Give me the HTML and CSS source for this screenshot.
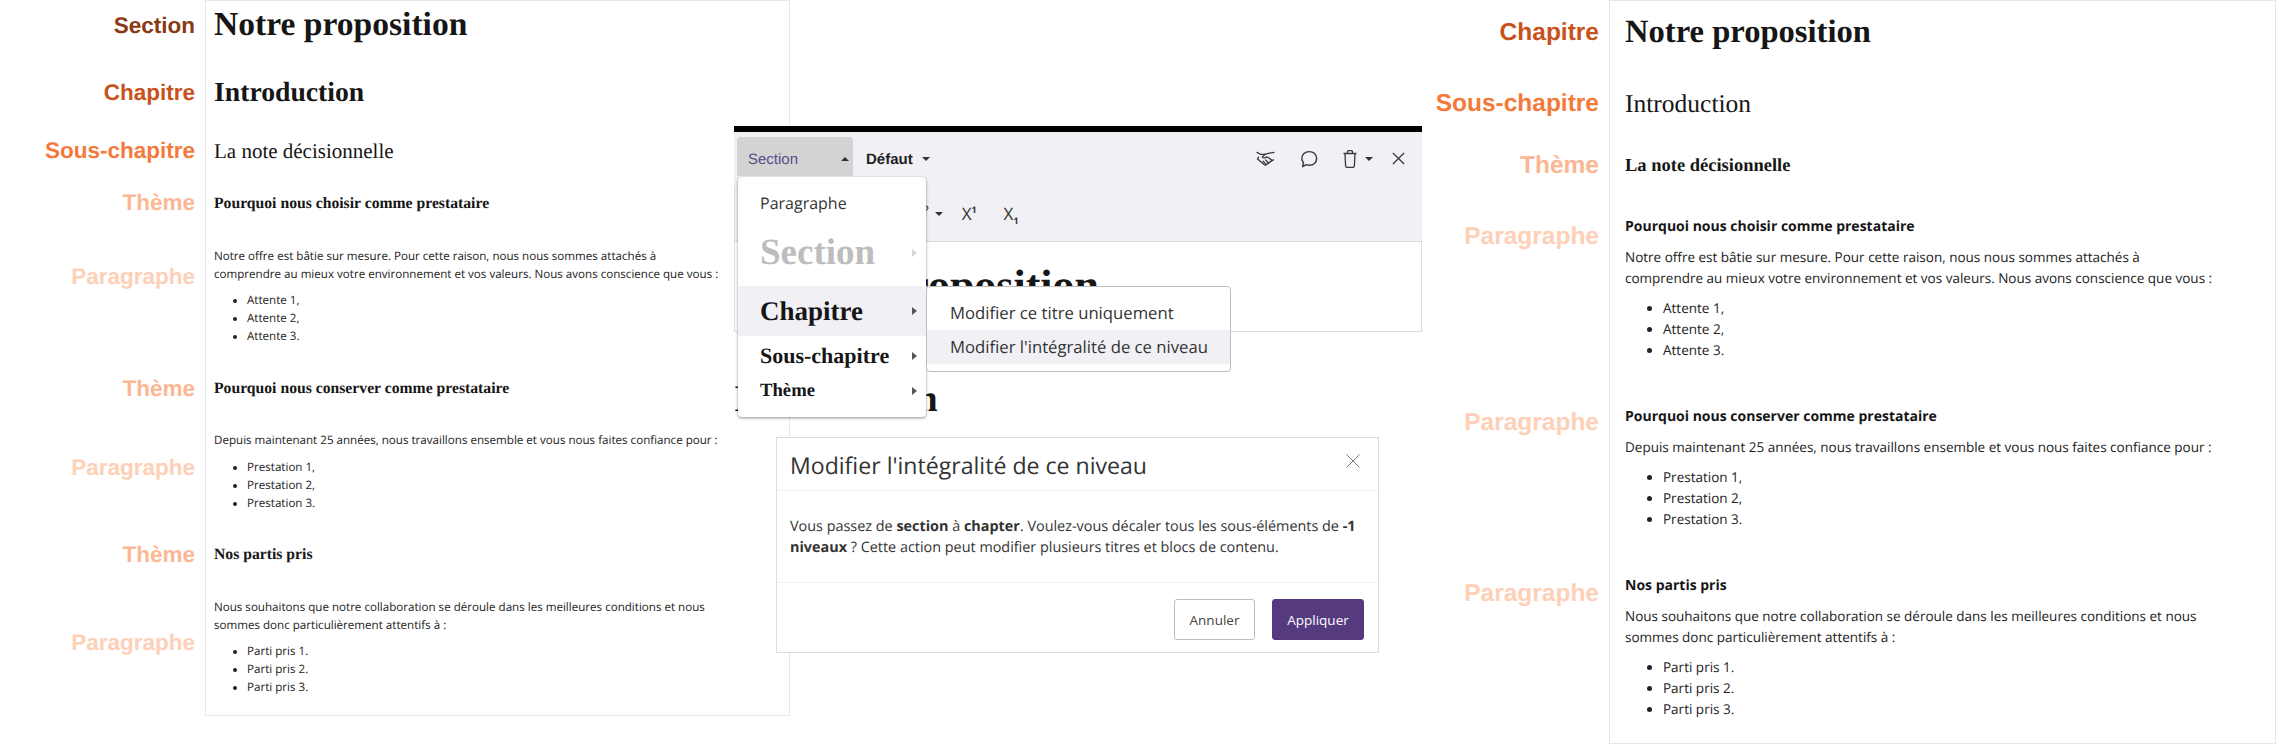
FILE: index.html
```html
<!DOCTYPE html>
<html lang="fr">
<head>
<meta charset="utf-8">
<title>Niveaux de titres</title>
<link rel="stylesheet" href="styles.css">
</head>
<body>
<div class="page">
  <section class="doc doc-a">
    <div class="block top"><span class="label c-section a-l1">Section</span><div class="cell a-p1"><h1 class="a-h1">Notre proposition</h1></div></div>
    <div class="block"><span class="label c-chapitre a-l2">Chapitre</span><div class="cell a-p2"><h2 class="a-h2">Introduction</h2></div></div>
    <div class="block"><span class="label c-sous a-l3">Sous-chapitre</span><div class="cell a-p3"><h3 class="a-h3">La note décisionnelle</h3></div></div>
    <div class="block"><span class="label c-theme a-l4">Thème</span><div class="cell a-p4"><h4 class="a-h4">Pourquoi nous choisir comme prestataire</h4></div></div>
    <div class="block"><span class="label c-para a-l5">Paragraphe</span><div class="cell a-p5">
      <p class="a-text">Notre offre est bâtie sur mesure. Pour cette raison, nous nous sommes attachés à<br>comprendre au mieux votre environnement et vos valeurs. Nous avons conscience que vous :</p>
      <ul class="a-list"><li>Attente 1,</li><li>Attente 2,</li><li>Attente 3.</li></ul>
    </div></div>
    <div class="block"><span class="label c-theme a-l6">Thème</span><div class="cell a-p6"><h4 class="a-h4">Pourquoi nous conserver comme prestataire</h4></div></div>
    <div class="block"><span class="label c-para a-l7">Paragraphe</span><div class="cell a-p7">
      <p class="a-text">Depuis maintenant 25 années, nous travaillons ensemble et vous nous faites confiance pour :</p>
      <ul class="a-list a-list-wide"><li>Prestation 1,</li><li>Prestation 2,</li><li>Prestation 3.</li></ul>
    </div></div>
    <div class="block"><span class="label c-theme a-l8">Thème</span><div class="cell a-p8"><h4 class="a-h4">Nos partis pris</h4></div></div>
    <div class="block bottom"><span class="label c-para a-l9">Paragraphe</span><div class="cell a-p9">
      <p class="a-text">Nous souhaitons que notre collaboration se déroule dans les meilleures conditions et nous<br>sommes donc particulièrement attentifs à :</p>
      <ul class="a-list"><li>Parti pris 1.</li><li>Parti pris 2.</li><li>Parti pris 3.</li></ul>
    </div></div>
  </section>

  <section class="doc doc-b">
    <div class="block top"><span class="label c-chapitre b-l1">Chapitre</span><div class="cell b-p1"><h1 class="b-h1">Notre proposition</h1></div></div>
    <div class="block"><span class="label c-sous b-l2">Sous-chapitre</span><div class="cell b-p2"><h2 class="b-h2">Introduction</h2></div></div>
    <div class="block"><span class="label c-theme b-l3">Thème</span><div class="cell b-p3"><h3 class="b-h3">La note décisionnelle</h3></div></div>
    <div class="block"><span class="label c-para b-l4">Paragraphe</span><div class="cell b-p4">
      <h4 class="b-h4">Pourquoi nous choisir comme prestataire</h4>
      <p class="b-text">Notre offre est bâtie sur mesure. Pour cette raison, nous nous sommes attachés à<br>comprendre au mieux votre environnement et vos valeurs. Nous avons conscience que vous :</p>
      <ul class="b-list"><li>Attente 1,</li><li>Attente 2,</li><li>Attente 3.</li></ul>
    </div></div>
    <div class="block"><span class="label c-para b-l5">Paragraphe</span><div class="cell b-p5">
      <h4 class="b-h4">Pourquoi nous conserver comme prestataire</h4>
      <p class="b-text">Depuis maintenant 25 années, nous travaillons ensemble et vous nous faites confiance pour :</p>
      <ul class="b-list"><li>Prestation 1,</li><li>Prestation 2,</li><li>Prestation 3.</li></ul>
    </div></div>
    <div class="block bottom"><span class="label c-para b-l6">Paragraphe</span><div class="cell b-p6">
      <h4 class="b-h4">Nos partis pris</h4>
      <p class="b-text">Nous souhaitons que notre collaboration se déroule dans les meilleures conditions et nous<br>sommes donc particulièrement attentifs à :</p>
      <ul class="b-list"><li>Parti pris 1.</li><li>Parti pris 2.</li><li>Parti pris 3.</li></ul>
    </div></div>
  </section>

  <div class="behind-title">Introduction</div>

  <div class="editor">
    <div class="tool-row tool-row-1">
      <div class="style-btn"><span>Section</span><i class="caret caret-up"></i></div>
      <div class="font-btn"><span>Défaut</span><i class="caret"></i></div>
      <div class="tool-icons">
        <svg class="ico ico-shake" viewBox="0 0 20 16" fill="none" stroke="#3a3a3a" stroke-width="1.4" stroke-linejoin="round" stroke-linecap="round"><path d="M1 1.500l3.500 2h5L13 2.500l6-1"/><path d="M9.500 3.500 6.500 6.500c1.500 1.500 3.300 1 4.500-.3l2 .8 4 3"/><path d="M2.500 6.500 1.500 8.500l7 6c1 .8 2.500.5 3-.5l5-3.500 2-1"/><path d="M7.500 11l2.500 2.500M10 9.500l3 3"/></svg>
        <svg class="ico ico-bubble" viewBox="0 0 20 20" fill="none" stroke="#3a3a3a" stroke-width="1.600" stroke-linejoin="round"><path d="M3 18.500 3.800 14C2.700 12.500 2 11 2 9.500 2 5 5.500 1.800 10.300 1.800S18.500 5 18.500 9.500 15 17 10.300 17c-1.300 0-2.500-.2-3.500-.7z"/></svg>
        <svg class="ico ico-trash" viewBox="0 0 14 18" fill="none" stroke="#3a3a3a" stroke-width="1.300" stroke-linejoin="round"><path d="M.5 3.500h13M2 3.500l.6 12.200c0 1 .6 1.700 1.500 1.700h5.800c.9 0 1.500-.7 1.500-1.700L12 3.500"/><path d="M4.500 3.500V1.700c0-.6.400-1 1-1h3c.6 0 1 .4 1 1v1.800"/></svg>
        <i class="caret caret-trash"></i>
        <svg class="ico ico-close" viewBox="0 0 14 14" fill="none" stroke="#3a3a3a" stroke-width="1.400"><path d="M1 1l12 12M13 1 1 13"/></svg>
      </div>
    </div>
    <div class="tool-row tool-row-2">
      <span class="tool-help">?</span><i class="caret"></i>
      <span class="tool-x tool-sup">X<sup>1</sup></span>
      <span class="tool-x tool-sub">X<sub>1</sub></span>
    </div>
    <div class="editor-body"><div class="editor-title">Notre proposition</div></div>

    <div class="menu">
      <div class="menu-item mi-para">Paragraphe</div>
      <div class="menu-item mi-section">Section<i class="arrow arrow-pale"></i></div>
      <div class="menu-item mi-chapitre">Chapitre<i class="arrow"></i></div>
      <div class="menu-item mi-sous">Sous-chapitre<i class="arrow"></i></div>
      <div class="menu-item mi-theme">Thème<i class="arrow"></i></div>
    </div>
    <div class="submenu">
      <div class="sub-item">Modifier ce titre uniquement</div>
      <div class="sub-item sub-active">Modifier l'intégralité de ce niveau</div>
    </div>
  </div>

  <div class="modal">
    <div class="modal-head">
      <div class="modal-title">Modifier l'intégralité de ce niveau</div>
      <svg class="modal-close" viewBox="0 0 14 14" fill="none" stroke="#777" stroke-width="1"><path d="M.5.5l13 13M13.500.5l-13 13"/></svg>
    </div>
    <div class="modal-body">Vous passez de <b>section</b> à <b>chapter</b>. Voulez-vous décaler tous les sous-éléments de <b>-1 niveaux</b> ? Cette action peut modifier plusieurs titres et blocs de contenu.</div>
    <div class="modal-foot">
      <button class="btn btn-ghost" type="button">Annuler</button>
      <button class="btn btn-main" type="button">Appliquer</button>
    </div>
  </div>
</div>
</body>
</html>
```
FILE: styles.css
```css
* { box-sizing: border-box; }
html, body { margin: 0; padding: 0; background: #fff; }
body { width: 2276px; height: 745px; overflow: hidden; font-family: "Open Sans", sans-serif; color: #222; text-rendering: geometricPrecision; }
h1, h2, h3, h4, p, ul { margin: 0; padding: 0; }

.page { position: relative; display: flex; justify-content: space-between; width: 2276px; height: 745px; }
.doc { display: flex; flex-direction: column; }
.doc-a { width: 790px; --col: 205px; }
.doc-b { width: 856px; --col: 189px; }

.block { display: flex; align-items: flex-start; }
.label {
  flex: 0 0 var(--col); padding-right: 10px; text-align: right;
  font: bold 22.5px/28px "Liberation Sans", Arial, sans-serif;
}
.doc-b .label { font-size: 24.5px; }
.cell { flex: 1; min-width: 0; border-left: 1px solid #e8e8ec; border-right: 1px solid #e8e8ec; }
.block.top .cell { border-top: 1px solid #e8e8ec; }
.block.bottom .cell { border-bottom: 1px solid #e8e8ec; }

.c-section { color: #8a3a12; }
.c-chapitre { color: #c8521c; }
.c-sous { color: #f37a3c; }
.c-theme { color: #fbb793; }
.c-para { color: #fdd0b7; }

h1, h2, h3, .a-h4, .editor-title, .behind-title, .menu-item { font-family: "Liberation Serif", "Times New Roman", serif; color: #161616; }

/* left document */
.doc-a .cell { padding-left: 8px; padding-right: 8px; }
.a-h1 { font-size: 33.6px; line-height: 40px; font-weight: 700; }
.a-h2 { font-size: 27.7px; line-height: 34px; font-weight: 700; }
.a-h3 { font-size: 21px; line-height: 28px; font-weight: 400; }
.a-h4 { font-size: 15.7px; line-height: 22px; font-weight: 700; }
.a-text { font-size: 11.6px; line-height: 18px; }
.a-list { font-size: 11.6px; line-height: 18px; margin: 8px 0 0; padding-left: 33px; }
.a-list-wide { margin-top: 9px; }
.a-p1 { padding-top: 4px; padding-bottom: 10px; }
.a-p2 { padding-top: 20px; padding-bottom: 10px; }
.a-p3 { padding-top: 18px; padding-bottom: 8px; }
.a-p4 { padding-top: 20px; padding-bottom: 10px; }
.a-p5 { padding-top: 23px; padding-bottom: 15px; }
.a-p6 { padding-top: 17px; padding-bottom: 10px; }
.a-p7 { padding-top: 22px; padding-bottom: 15px; }
.a-p8 { padding-top: 16px; padding-bottom: 10px; }
.a-p9 { padding-top: 23px; padding-bottom: 18px; }
.a-l1 { margin-top: 12px; }
.a-l2 { margin-top: 24px; }
.a-l3 { margin-top: 18px; }
.a-l4 { margin-top: 16px; }
.a-l5 { margin-top: 38px; }
.a-l6 { margin-top: 14px; }
.a-l7 { margin-top: 44px; }
.a-l8 { margin-top: 13px; }
.a-l9 { margin-top: 53px; }

/* right document */
.doc-b .cell { padding-left: 15px; padding-right: 16px; }
.b-h1 { font-size: 32.6px; line-height: 40px; font-weight: 700; }
.b-h2 { font-size: 25.5px; line-height: 30px; font-weight: 400; }
.b-h3 { font-size: 18.5px; line-height: 24px; font-weight: 700; }
.b-h4 { font-size: 14px; line-height: 20px; font-weight: 700; color: #161616; }
.b-text { font-size: 13.5px; line-height: 21px; margin-top: 10px; }
.b-list { font-size: 13.5px; line-height: 21px; margin: 9px 0 0; padding-left: 38px; }
.b-p1 { padding-top: 11px; padding-bottom: 17px; }
.b-p2 { padding-top: 20px; padding-bottom: 16px; }
.b-p3 { padding-top: 19px; padding-bottom: 20px; }
.b-p4 { padding-top: 19px; height: 209px; }
.b-p5 { height: 169px; }
.b-p6 { padding-bottom: 23px; }
.b-l1 { margin-top: 19px; }
.b-l2 { margin-top: 21px; }
.b-l3 { margin-top: 17px; }
.b-l4 { margin-top: 25px; }
.b-l5 { margin-top: 2px; }
.b-l6 { margin-top: 4px; }

/* editor window, over the documents */
.editor {
  position: absolute; left: 734px; top: 126px; width: 688px;
  border-top: 6px solid #000; display: flex; flex-direction: column; z-index: 2;
}
.tool-row { background: #f0f0f5; display: flex; align-items: center; }
.tool-row-1 { height: 54px; padding: 5px 0 10px 3px; box-shadow: inset 0 -1px 0 #ececf0; }
.tool-row-2 { height: 56px; padding: 0 0 0 192px; border-bottom: 1px solid #d8d8dc; border-left: 1px solid #dcdce0; }
.style-btn {
  width: 116px; height: 39px; padding: 5px 4px 0 11px; background: #d3d3d3;
  border-radius: 4px 4px 0 0; display: flex; align-items: center; justify-content: space-between;
  font: 15px "Liberation Sans", Arial, sans-serif; color: #5b4a8c;
}
.font-btn { display: flex; align-items: center; gap: 9px; margin-left: 13px; padding-top: 5px; font: bold 15px "Liberation Sans", Arial, sans-serif; color: #222; }
.caret { display: block; width: 0; height: 0; border-left: 4px solid transparent; border-right: 4px solid transparent; border-top: 4px solid #333; }
.caret-up { border-top: 0; border-bottom: 4px solid #333; }
.tool-icons { margin-left: auto; display: flex; align-items: center; padding: 4px 17px 0 0; }
.ico { display: block; }
.ico-shake { width: 19px; height: 15px; }
.ico-bubble { width: 18px; height: 18px; margin-left: 25px; }
.ico-trash { width: 14px; height: 18px; margin-left: 25px; }
.caret-trash { margin-left: 8px; }
.ico-close { width: 13px; height: 13px; margin-left: 19px; }
.tool-help { font-size: 13px; margin-right: 6px; margin-left: -4px; transform: translateY(-4px); color: #333; }
.tool-x { font-size: 17px; color: #333; line-height: 20px; }
.tool-x sup, .tool-x sub { font-size: 9px; font-weight: 700; line-height: 0; }
.tool-sup { margin-left: 19px; }
.tool-sub { margin-left: 27px; }
.editor-body { height: 90px; background: #fff; overflow: hidden; border: 1px solid #dcdce0; border-top: 0; }
.editor-title { font-size: 44px; line-height: 50px; font-weight: 700; padding: 19px 0 0 32px; }
.behind-title { position: absolute; left: 734px; top: 377px; font-size: 37.5px; line-height: 46px; font-weight: 700; z-index: 1; }

.menu {
  position: absolute; left: 4px; top: 45px; width: 188px; height: 240px; padding-top: 9px;
  background: #fff; border-radius: 4px; box-shadow: 0 1px 3px rgba(0,0,0,.45);
}
.menu-item { position: relative; padding-left: 22px; font-weight: 700; }
.mi-para { height: 34px; font: 400 16px/34px "Open Sans", sans-serif; color: #333; }
.mi-section { height: 66px; font-size: 37px; line-height: 54px; color: #bdbdbd; padding-top: 6px; }
.mi-chapitre { height: 50px; font-size: 27px; line-height: 50px; background: #f0f0f5; }
.mi-sous { height: 39px; font-size: 22px; line-height: 40px; }
.mi-theme { height: 31px; font-size: 18.7px; line-height: 32px; }
.arrow { position: absolute; right: 9px; top: 50%; margin-top: -4px; width: 0; height: 0; border-top: 4px solid transparent; border-bottom: 4px solid transparent; border-left: 5px solid #555; }
.arrow-pale { border-left-color: #d8d8d8; }

.submenu {
  position: absolute; left: 192px; top: 154px; width: 305px; height: 86px; padding-top: 9px;
  background: #fff; border: 1px solid #bdbdbd; border-radius: 4px;
}
.sub-item { height: 34px; line-height: 34px; padding-left: 23px; font-size: 16.7px; color: #333; }
.sub-active { background: #f0f0f5; }

.modal {
  position: absolute; left: 776px; top: 437px; width: 603px; height: 216px;
  background: #fff; border: 1px solid #dcdcdc; z-index: 3; display: flex; flex-direction: column; color: #333;
}
.modal-head { height: 53px; display: flex; align-items: center; justify-content: space-between; padding: 2px 18px 0 13px; border-bottom: 1px solid #efeff5; }
.modal-title { font-size: 23.1px; line-height: 30px; }
.modal-close { width: 14px; height: 14px; margin-top: -8px; }
.modal-body { height: 92px; padding: 25px 13px 0; font-size: 14.4px; line-height: 21px; border-bottom: 1px solid #efeff5; }
.modal-foot { flex: 1; display: flex; justify-content: flex-end; gap: 17px; padding: 16px 14px 0 0; }
.btn { height: 41px; font: 13.5px "Open Sans", sans-serif; border-radius: 3px; padding: 0; }
.btn-ghost { width: 81px; background: #fff; border: 1px solid #bdbdbd; color: #444; }
.btn-main { width: 92px; background: #553a80; border: 1px solid #553a80; color: #fff; }
```
